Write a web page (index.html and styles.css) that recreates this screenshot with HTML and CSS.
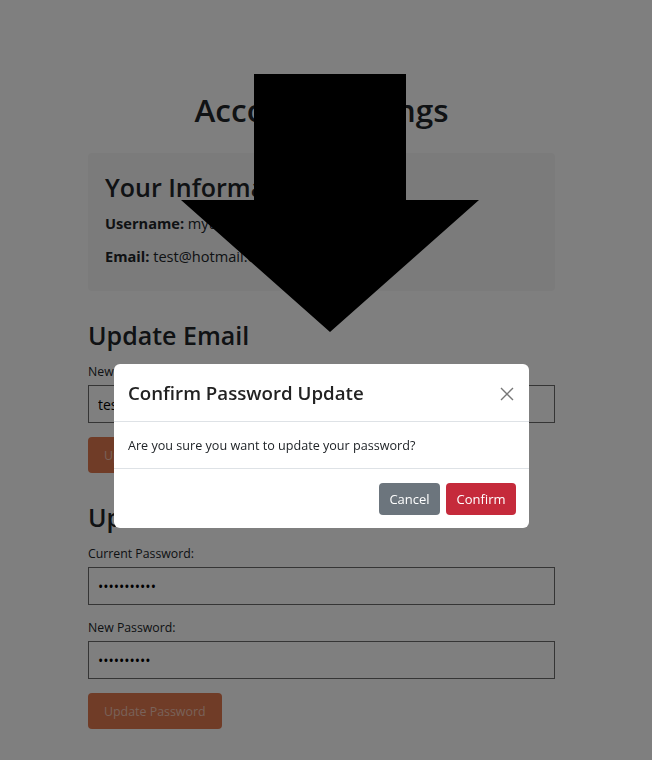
FILE: index.html
```html
<!DOCTYPE html>
<html lang="en">
<head>
<meta charset="utf-8">
<title>Account Settings</title>
<link rel="stylesheet" href="styles.css">
</head>
<body>
<main class="page">
  <h1 class="page-title">Account Settings</h1>

  <section class="info-card">
    <h2 class="section-title">Your Information</h2>
    <p class="info-row"><strong>Username:</strong> myusername</p>
    <p class="info-row"><strong>Email:</strong> test@hotmail.com</p>
  </section>

  <section class="form-section">
    <h2 class="section-title">Update Email</h2>
    <label class="field-label">New Email:</label>
    <input class="field-input" type="text" value="test@hotmail.com">
    <button class="btn-update">Update Email</button>
  </section>

  <section class="form-section">
    <h2 class="section-title">Update Password</h2>
    <label class="field-label">Current Password:</label>
    <input class="field-input" type="password" value="12345678901">
    <label class="field-label next">New Password:</label>
    <input class="field-input" type="password" value="1234567890">
    <button class="btn-update">Update Password</button>
  </section>
</main>

<div class="backdrop"></div>

<div class="modal">
  <div class="modal-dialog">
    <div class="modal-header">
      <h5 class="modal-title">Confirm Password Update</h5>
      <button class="close-btn" aria-label="Close">
        <svg width="16" height="16" viewBox="0 0 16 16"><path d="M2 2 L14 14 M14 2 L2 14" stroke="#777" stroke-width="1.4" fill="none"/></svg>
      </button>
    </div>
    <div class="modal-body">Are you sure you want to update your password?</div>
    <div class="modal-footer">
      <button class="btn btn-cancel">Cancel</button>
      <button class="btn btn-confirm">Confirm</button>
    </div>
  </div>
</div>

<svg class="arrow" width="652" height="760" viewBox="0 0 652 760">
  <polygon points="254,74 406,74 406,200 479,200 330,332 181,200 254,200" fill="#000"/>
</svg>
</body>
</html>
```

FILE: styles.css
```css
* { box-sizing: border-box; }

body {
  margin: 0;
  background: #fff;
  color: #212529;
  font-family: "Open Sans", "Noto Sans", sans-serif;
  font-size: 14px;
  line-height: 1.5;
}

.page {
  width: 467px;
  margin-left: 88px;
  padding-bottom: 40px;
}

.page-title {
  margin: 91px 0 24px;
  text-align: center;
  font-size: 31.5px;
  font-weight: 600;
  line-height: 38px;
}

.info-card {
  background: #f6f6f6;
  border-radius: 4px;
  padding: 18px 17px 13px;
}

.section-title {
  margin: 0 0 9px;
  font-size: 25px;
  font-weight: 600;
  line-height: 32px;
}

.info-row {
  margin: 0 0 11px;
  font-size: 14.6px;
  line-height: 22px;
}

.info-row strong { font-weight: 700; }

.form-section {
  display: flex;
  flex-direction: column;
  align-items: flex-start;
  margin-top: 28px;
}

.field-label {
  display: block;
  font-size: 12.3px;
  line-height: 21px;
  margin: 1px 0 3px;
}

.field-label.next { margin-top: 12px; }

.field-input {
  width: 100%;
  height: 38px;
  border: 1px solid #6a6a6a;
  background: #fff;
  padding: 0 9px;
  font-family: inherit;
  font-size: 14px;
  color: #000;
}

.btn-update {
  margin-top: 14px;
  height: 36px;
  padding: 0 16px;
  border: none;
  border-radius: 4px;
  background: #e0784f;
  color: #f2c4b2;
  font-family: inherit;
  font-size: 12.4px;
}

.backdrop {
  position: fixed;
  inset: 0;
  background: rgba(0, 0, 0, 0.5);
}

.modal {
  position: fixed;
  inset: 0;
}

.modal-dialog {
  width: 415px;
  margin: 364px 0 0 114px;
  background: #fff;
  border-radius: 6px;
  overflow: hidden;
}

.modal-header {
  display: flex;
  align-items: center;
  justify-content: space-between;
  height: 58px;
  padding: 2px 13px 0 14px;
  border-bottom: 1px solid #dee2e6;
}

.modal-title {
  margin: 0;
  font-size: 18.7px;
  font-weight: 600;
  color: #222;
}

.close-btn {
  border: none;
  background: none;
  padding: 0;
  width: 18px;
  height: 18px;
  display: flex;
  align-items: center;
  justify-content: center;
}

.modal-body {
  height: 47px;
  display: flex;
  align-items: center;
  padding: 2px 14px 0;
  font-size: 12.6px;
  border-bottom: 1px solid #dee2e6;
}

.modal-footer {
  display: flex;
  justify-content: flex-end;
  gap: 6px;
  padding: 14px 13px 13px;
}

.btn {
  height: 32px;
  padding: 0 10px;
  border: none;
  border-radius: 4px;
  color: #fff;
  font-family: inherit;
  font-size: 13px;
}

.btn-cancel { background: #6c757d; width: 61px; }
.btn-confirm { background: #c52a3b; width: 70px; }

.arrow {
  position: absolute;
  left: 0;
  top: 0;
  pointer-events: none;
}
```
